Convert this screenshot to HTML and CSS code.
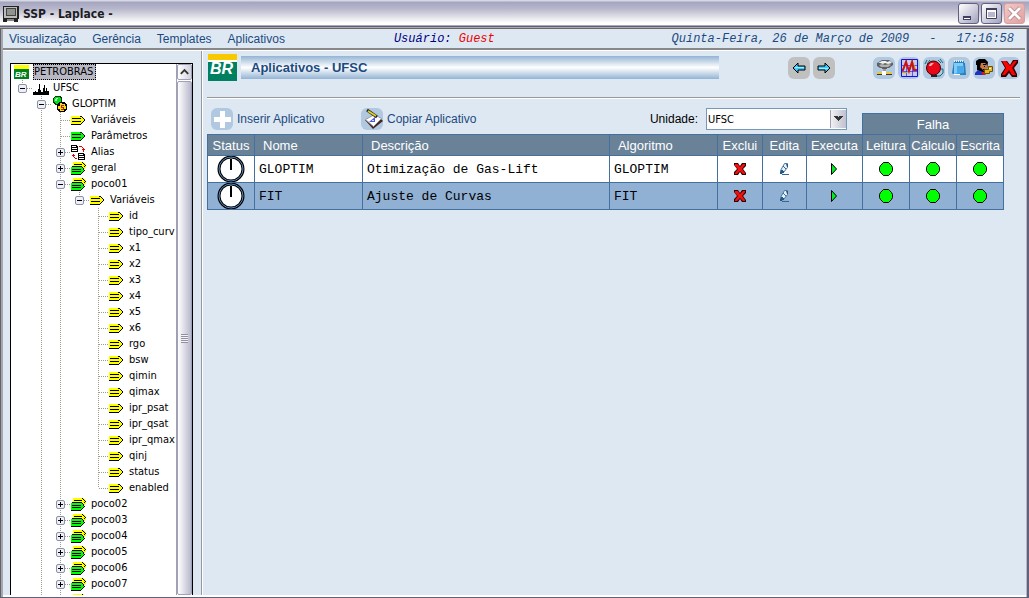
FILE: index.html
```html
<!DOCTYPE html>
<html lang="pt-BR">
<head>
<meta charset="utf-8">
<title>SSP - Laplace -</title>
<link rel="stylesheet" href="styles.css">
</head>
<body>
<svg class="defs" aria-hidden="true">
  <symbol id="tag-yellow" viewBox="0 0 16 16">
    <path fill="#ff0" d="M0 4h10l3 3v2l-3 3H0z"/>
    <path fill="#000" d="M1 6h9v1H1zM1 9h9v1H1zM0 12h10v1H0zM9 4h2v1H9zM11 5h1v1h-1zM12 6h1v1h-1zM13 7h1v2h-1zM12 9h1v1h-1zM11 10h1v1h-1zM10 11h1v1h-1z"/>
  </symbol>
  <symbol id="tag-green" viewBox="0 0 16 16">
    <path fill="#0f0" d="M0 4h10l3 3v2l-3 3H0z"/>
    <path fill="#000" d="M1 6h9v1H1zM1 9h9v1H1zM0 12h10v1H0zM9 4h2v1H9zM11 5h1v1h-1zM12 6h1v1h-1zM13 7h1v2h-1zM12 9h1v1h-1zM11 10h1v1h-1zM10 11h1v1h-1z"/>
  </symbol>
  <symbol id="tag-pair" viewBox="0 0 16 16">
    <path fill="#ff0" d="M2 2h10l3 3v2l-4 4H2z"/>
    <path fill="#000" d="M3 4h8v1H3zM11 2h1v1h-1zM12 3h1v1h-1zM13 4h1v1h-1zM14 5h1v1h-1zM13 6h1v1h-1z"/>
    <path fill="#0f0" d="M0 7h10l3 3v1l-3 3H0z"/>
    <path fill="#000" d="M1 6h10v1H1zM1 9h9v1H1zM1 11h9v1H1zM0 14h10v1H0zM11 7h1v1h-1zM12 8h1v2h-1zM13 10h1v1h-1zM12 11h1v1h-1zM11 12h1v1h-1zM10 13h1v1h-1z"/>
  </symbol>
  <symbol id="alias" viewBox="0 0 16 16">
    <path fill="#000" d="M0 1h5l2 2v5H0z"/><path fill="#fff" d="M1 2h4v1H1zM1 4h5v1H1zM1 6h5v1H1z"/>
    <path fill="#000" d="M7 9h5l2 2v5H7z"/><path fill="#fff" d="M8 10h4v1H8zM8 12h5v1H8zM8 14h5v1H8z"/>
    <path fill="#e00000" d="M8 2h3v1H8zM11 3h1v1h-1zM12 4h1v4h-1zM11 5h3v1h-3zM2 10h1v3H2zM1 11h3v1H1zM3 13h1v1H3zM4 14h2v1H4z"/>
  </symbol>
  <symbol id="plant" viewBox="0 0 16 16">
    <path fill="#000" d="M0 12h2v-1h1v1h2V9h1V4h1v6h1v2h2V8h1V5h1v6h1V8h1v3h2v4H0z"/>
  </symbol>
  <symbol id="gears" viewBox="0 0 16 16">
    <path fill="#003800" d="M3 0h5l2 2v5l-2 2H3L1 7V2z"/><path fill="#0d2" d="M3 1h4l2 2v3L7 8H4L2 6V3z"/><path fill="#afa" d="M4 2h2v1H5v2H3V3h1z"/>
    <path fill="#000" d="M7 6h5l3 3v5l-3 2H7l-2-2V8z"/><path fill="#fd0" d="M8 7h2v1h3v2h1v3h-2v2H8v-2H6v-3h2z"/><path fill="#a22" d="M9 9h3v1h-2v1h2v3H9v-1h2v-1H9z"/>
  </symbol>
  <symbol id="delete" viewBox="0 0 14 14">
    <path fill="#300" d="M1 1h4l2 3 2-3h4v3l-3 3 3 4v2H9l-2-3-2 3H1v-3l3-3-3-4z"/>
    <path fill="#f01010" d="M2 2h3l2 3 3-3h2v1L9 7l3 4v1h-2L7 9l-3 3H2v-1l3-4-3-3z"/>
  </symbol>
  <symbol id="edit" viewBox="0 0 14 14">
    <path fill="#e8f0f8" stroke="#4878a0" d="M7.500 1.500h3v4l-4 5-3 1v-3z"/><path fill="#205888" d="M4 8h2v1h1v2H5v1H3v-2h1zM9 2h2v3h-1z"/>
    <path stroke="#306898" d="M6 4l3 3M5 12.500h7"/>
  </symbol>
  <symbol id="run" viewBox="0 0 14 14"><path fill="#0e2" stroke="#000" d="M4.500 1.500v11l5-5.500z"/></symbol>
  <symbol id="ok" viewBox="0 0 16 16"><path fill="#0f0" stroke="#000" d="M5.500 1.500h5l3 3 1 2v3l-1 2-3 3h-5l-3-3-1-2v-3l1-2z"/></symbol>
  <symbol id="gauge" viewBox="0 0 28 26">
    <circle cx="14" cy="13" r="12" fill="#fff" stroke="#000" stroke-width="3"/>
    <circle cx="14" cy="13" r="12" fill="none" stroke="#5888b8"/><path fill="#000" d="M13 3h2v11h-2z"/>
  </symbol>
  <symbol id="arrow" viewBox="0 0 22 22"><path fill="#40c8ff" stroke="#000" d="M5 11l5-5v3h7v4h-7v3z"/><path stroke="#9ef" d="M7 10.500h9"/></symbol>
</svg>

<div class="window">
  <header class="titlebar">
    <svg class="app-icon" viewBox="0 0 16 16" aria-hidden="true"><path fill="#222" d="M0 0h16v13H0zM0 13h4v3H0zM11 13h4v3h-4z"/><path fill="#bbb" d="M1 1h13v11H1z"/><path fill="#444" d="M3 2h10v8H3z"/><path fill="#909490" d="M4 3h8v6H4z"/><path fill="#888" d="M4 13h7v2H4z"/></svg>
    <h1 class="title">SSP - Laplace -</h1>
    <button class="win-btn" aria-label="Minimizar"><svg viewBox="0 0 19 19"><path fill="#404060" d="M4 12h8v4H4z"/><path fill="#fff" d="M5 14h6v1H5z"/></svg></button>
    <button class="win-btn" aria-label="Maximizar"><svg viewBox="0 0 19 19"><path fill="#fff" stroke="#404060" d="M4.500 4.500h10v10h-10z"/><path fill="#404060" d="M4 4h11v2H4z"/><path fill="#b8b8cc" d="M6 8h7v5H6z"/></svg></button>
    <button class="win-btn close" aria-label="Fechar"><svg viewBox="0 0 19 19"><path stroke="#a06870" stroke-width="4" d="M4 4l11 11M15 4L4 15"/><path stroke="#fff" stroke-width="3" d="M4 4l11 11M15 4L4 15"/></svg></button>
  </header>

  <div class="frame">
    <div class="menubar">
      <nav class="menus"><button>Visualização</button><button>Gerência</button><button>Templates</button><button>Aplicativos</button></nav>
      <p class="user">Usuário: <span class="guest">Guest</span></p>
      <p class="clock"><span>Quinta-Feira, 26 de Março de 2009</span><span>-</span><time>17:16:58</time></p>
    </div>

    <div class="body">
      <aside class="sidebar">
        <div class="tree-box">
          <div class="tree">
            <div class="root"><svg class="ico" viewBox="0 0 16 16" aria-hidden="true"><path fill="#ff0" d="M0 1h15v4H0z"/><path fill="#008020" d="M0 5h15v10H0z"/><text x="1" y="13" class="br-small">BR</text></svg><span class="selected">PETROBRAS</span></div>
            <ul>
              <li><div class="row"><span class="slot"><button class="toggle open" aria-label="UFSC"></button></span><svg class="ico"><use href="#plant"/></svg>UFSC</div>
                <ul>
                  <li class="more"><div class="row"><span class="slot"><button class="toggle open" aria-label="GLOPTIM"></button></span><svg class="ico"><use href="#gears"/></svg>GLOPTIM</div>
                    <ul>
                      <li><div class="row"><span class="slot"></span><svg class="ico"><use href="#tag-yellow"/></svg>Variáveis</div></li>
                      <li><div class="row"><span class="slot"></span><svg class="ico"><use href="#tag-green"/></svg>Parâmetros</div></li>
                      <li><div class="row"><span class="slot"><button class="toggle" aria-label="Alias"></button></span><svg class="ico"><use href="#alias"/></svg>Alias</div></li>
                      <li><div class="row"><span class="slot"><button class="toggle" aria-label="geral"></button></span><svg class="ico"><use href="#tag-pair"/></svg>geral</div></li>
                      <li><div class="row"><span class="slot"><button class="toggle open" aria-label="poco01"></button></span><svg class="ico"><use href="#tag-pair"/></svg>poco01</div>
                        <ul>
                          <li><div class="row"><span class="slot"><button class="toggle open" aria-label="Variáveis"></button></span><svg class="ico"><use href="#tag-yellow"/></svg>Variáveis</div>
                            <ul>
                              <li><div class="row"><span class="slot"></span><svg class="ico"><use href="#tag-yellow"/></svg>id</div></li>
                              <li><div class="row"><span class="slot"></span><svg class="ico"><use href="#tag-yellow"/></svg>tipo_curv</div></li>
                              <li><div class="row"><span class="slot"></span><svg class="ico"><use href="#tag-yellow"/></svg>x1</div></li>
                              <li><div class="row"><span class="slot"></span><svg class="ico"><use href="#tag-yellow"/></svg>x2</div></li>
                              <li><div class="row"><span class="slot"></span><svg class="ico"><use href="#tag-yellow"/></svg>x3</div></li>
                              <li><div class="row"><span class="slot"></span><svg class="ico"><use href="#tag-yellow"/></svg>x4</div></li>
                              <li><div class="row"><span class="slot"></span><svg class="ico"><use href="#tag-yellow"/></svg>x5</div></li>
                              <li><div class="row"><span class="slot"></span><svg class="ico"><use href="#tag-yellow"/></svg>x6</div></li>
                              <li><div class="row"><span class="slot"></span><svg class="ico"><use href="#tag-yellow"/></svg>rgo</div></li>
                              <li><div class="row"><span class="slot"></span><svg class="ico"><use href="#tag-yellow"/></svg>bsw</div></li>
                              <li><div class="row"><span class="slot"></span><svg class="ico"><use href="#tag-yellow"/></svg>qimin</div></li>
                              <li><div class="row"><span class="slot"></span><svg class="ico"><use href="#tag-yellow"/></svg>qimax</div></li>
                              <li><div class="row"><span class="slot"></span><svg class="ico"><use href="#tag-yellow"/></svg>ipr_psat</div></li>
                              <li><div class="row"><span class="slot"></span><svg class="ico"><use href="#tag-yellow"/></svg>ipr_qsat</div></li>
                              <li><div class="row"><span class="slot"></span><svg class="ico"><use href="#tag-yellow"/></svg>ipr_qmax</div></li>
                              <li><div class="row"><span class="slot"></span><svg class="ico"><use href="#tag-yellow"/></svg>qinj</div></li>
                              <li><div class="row"><span class="slot"></span><svg class="ico"><use href="#tag-yellow"/></svg>status</div></li>
                              <li><div class="row"><span class="slot"></span><svg class="ico"><use href="#tag-yellow"/></svg>enabled</div></li>
                            </ul>
                          </li>
                        </ul>
                      </li>
                      <li><div class="row"><span class="slot"><button class="toggle" aria-label="poco02"></button></span><svg class="ico"><use href="#tag-pair"/></svg>poco02</div></li>
                      <li><div class="row"><span class="slot"><button class="toggle" aria-label="poco03"></button></span><svg class="ico"><use href="#tag-pair"/></svg>poco03</div></li>
                      <li><div class="row"><span class="slot"><button class="toggle" aria-label="poco04"></button></span><svg class="ico"><use href="#tag-pair"/></svg>poco04</div></li>
                      <li><div class="row"><span class="slot"><button class="toggle" aria-label="poco05"></button></span><svg class="ico"><use href="#tag-pair"/></svg>poco05</div></li>
                      <li><div class="row"><span class="slot"><button class="toggle" aria-label="poco06"></button></span><svg class="ico"><use href="#tag-pair"/></svg>poco06</div></li>
                      <li><div class="row"><span class="slot"><button class="toggle" aria-label="poco07"></button></span><svg class="ico"><use href="#tag-pair"/></svg>poco07</div></li>
                      <li class="more"><div class="row"><span class="slot"></span><svg class="ico"><use href="#tag-pair"/></svg></div></li>
                    </ul>
                  </li>
                </ul>
              </li>
            </ul>
          </div>
          <div class="scroll">
            <button class="scroll-up" aria-label="Rolar para cima"><svg viewBox="0 0 14 14"><path fill="none" stroke="#333" stroke-width="2" d="M3 9l4-4 4 4"/></svg></button>
            <div class="thumb"><span class="grip"></span></div>
          </div>
        </div>
      </aside>

      <main class="main">
        <div class="head">
          <svg class="logo" viewBox="0 0 29 27" aria-hidden="true"><path fill="#f8c800" d="M0 0h29v6H0z"/><path fill="#fff" d="M0 6h29v2H0z"/><path fill="#008060" d="M0 8h29v19H0z"/><text x="2" y="20" class="br-text">BR</text></svg>
          <h2 class="banner">Aplicativos - UFSC</h2>
          <div class="nav">
            <button class="tool gray" aria-label="Voltar"><svg><use href="#arrow"/></svg></button>
            <button class="tool gray flip" aria-label="Avançar"><svg><use href="#arrow"/></svg></button>
          </div>
          <div class="tools">
            <button class="tool" aria-label="Rede"><svg viewBox="0 0 22 22"><path fill="#606060" d="M4 6l5-3h7l4 3v2l-4 3h-2v1H9v-1H7L4 9z"/><path fill="#f0f0f0" d="M5 6l4-2h4l1 1 3-1 2 2-4 1-3-1-2 1-3-1z"/><path fill="#b0b0b0" d="M6 8l3-1 3 1 4-1 2 1-3 2H8z"/><path fill="#999" d="M10 12h3v3h-3z"/><path fill="#333" d="M4 17h15v1H4z"/><path fill="#e8c840" d="M4 15h5v2H4zM13 15h6v2h-6z"/><path fill="#fff" d="M9 14h4v4H9z"/></svg></button>
            <button class="tool" aria-label="Gráfico"><svg viewBox="0 0 22 22"><path fill="#c8c8e8" stroke="#1010e8" d="M3.500 2.500h16v17h-16z"/><path stroke="#1010e8" stroke-opacity=".6" fill="none" d="M8.500 3v16M14.500 3v16M4 8.500h15M4 14.500h15"/><path fill="none" stroke="#b8b010" d="M4 15.500h5l3-3 3-7 3 8"/><path fill="none" stroke="#d01010" stroke-width="2" d="M4 13h1l3-8 3 9 3-9 2 8h3"/></svg></button>
            <button class="tool" aria-label="Alarme"><svg viewBox="0 0 22 22"><path fill="none" stroke="#186878" d="M2 7l2-4M4 7l3-4M15 3l3 3M17 2l3 4M18 12h2v4l-3 3h-4"/><circle cx="10.500" cy="11" r="7" fill="#e80818" stroke="#400"/><path fill="#ffb0b0" d="M6 8l2-2h3L8 9H6z"/><path fill="#222" d="M8 18h6v2H8z"/></svg></button>
            <button class="tool" aria-label="Bloco de notas"><svg viewBox="0 0 22 22"><path fill="#2880c0" d="M6 4h10v2h1l1 12H6L4 16z"/><path fill="#80ccf8" d="M6 6h9l1 9-10 2z"/><path fill="#48a8e8" d="M9 9h6l1 7-7 1z"/><path stroke="#eee" stroke-dasharray="1 1" stroke-width="2" d="M6 4h10"/><path fill="#fff" d="M5 17h7v1H6z"/></svg></button>
            <button class="tool" aria-label="Usuário"><svg viewBox="0 0 22 22"><path fill="#000" d="M3 4l3-2h6l3 3-1 8-3 3-7-3V8H3z"/><path fill="#c87840" d="M8 6h4l2 2v4l-3 2-4-4z"/><path fill="#000" d="M10 7h3v1h-3zM11 9h1v1h-1zM10 12h3v1h-3z"/><path fill="#2030c0" d="M2 16l3-3 5 2 3 3H2z"/><path fill="#d81818" d="M8 15h4v3h-2z"/><path fill="#e8b820" stroke="#705000" d="M11.500 12.500h4v-3h4v5h-3v2h-5z"/><path fill="#fff" d="M16 11h2v1h-2z"/></svg></button>
            <button class="tool" aria-label="Sair"><svg viewBox="0 0 22 22"><path fill="#300" d="M3 4h6l3 4 3-5h5v3l-4 5 3 6v3h-5l-3-4-3 4H3v-3l4-6z"/><path fill="#f00" d="M4 4h4l4 5 4-5h3l-5 7 4 7h-4l-3-5-4 5H4l4-7z"/></svg></button>
          </div>
        </div>

        <div class="panel">
          <div class="actions">
            <button class="action"><span class="tool"><svg viewBox="0 0 22 22"><path fill="#fff" d="M9 3h5v6h6v5h-6v6H9v-6H3V9h6z"/></svg></span>Inserir Aplicativo</button>
            <button class="action"><span class="tool"><svg viewBox="0 0 22 22"><path fill="#402820" d="M4 12l8 9 10-8-2-2-8 7-6-6z"/><path fill="#fff" stroke="#999" d="M4.500 11.500l9-5 7 4-8 8z"/><path fill="#5058e8" d="M8 14l6-5v5z"/><path fill="#d0d0ff" d="M11 12h2v1h-2z"/><path stroke="#222" stroke-width="3" d="M6 2l10 7"/><path stroke="#e0d020" stroke-width="2" d="M7 3l8 5"/></svg></span>Copiar Aplicativo</button>
            <label class="unit" for="unit">Unidade:</label>
            <select id="unit" class="unit-select"><option>UFSC</option></select>
          </div>

          <table class="apps">
            <colgroup><col class="c47"><col class="c108"><col><col class="c108"><col class="c45"><col class="c44"><col class="c56"><col class="c47"><col class="c47"><col class="c47"></colgroup>
            <thead>
              <tr><td class="blank" colspan="7"></td><th colspan="3">Falha</th></tr>
              <tr><th>Status</th><th class="left">Nome</th><th class="left">Descrição</th><th class="left">Algoritmo</th><th>Exclui</th><th>Edita</th><th>Executa</th><th>Leitura</th><th>Cálculo</th><th>Escrita</th></tr>
            </thead>
            <tbody>
              <tr><td><svg class="gauge"><use href="#gauge"/></svg></td><td class="mono">GLOPTIM</td><td class="mono">Otimização de Gas-Lift</td><td class="mono">GLOPTIM</td>
                <td><button class="cell-btn" aria-label="Exclui GLOPTIM"><svg><use href="#delete"/></svg></button></td><td><button class="cell-btn" aria-label="Edita GLOPTIM"><svg><use href="#edit"/></svg></button></td><td><button class="cell-btn" aria-label="Executa GLOPTIM"><svg><use href="#run"/></svg></button></td>
                <td><svg class="led"><use href="#ok"/></svg></td><td><svg class="led"><use href="#ok"/></svg></td><td><svg class="led"><use href="#ok"/></svg></td></tr>
              <tr class="alt"><td><svg class="gauge"><use href="#gauge"/></svg></td><td class="mono">FIT</td><td class="mono">Ajuste de Curvas</td><td class="mono">FIT</td>
                <td><button class="cell-btn" aria-label="Exclui FIT"><svg><use href="#delete"/></svg></button></td><td><button class="cell-btn" aria-label="Edita FIT"><svg><use href="#edit"/></svg></button></td><td><button class="cell-btn" aria-label="Executa FIT"><svg><use href="#run"/></svg></button></td>
                <td><svg class="led"><use href="#ok"/></svg></td><td><svg class="led"><use href="#ok"/></svg></td><td><svg class="led"><use href="#ok"/></svg></td></tr>
            </tbody>
          </table>
        </div>
      </main>
    </div>
  </div>
</div>
</body>
</html>
```
FILE: styles.css
```css
* { box-sizing: border-box; }
body { margin: 0; font: 12px "Liberation Sans", Arial, sans-serif; color: #1c4a80; }
button { font: inherit; color: inherit; border: 0; padding: 0; background: none; }
svg { display: block; }
h1, h2, p, ul { margin: 0; padding: 0; }
.defs { position: absolute; width: 0; height: 0; }
.br-text { font: italic bold 16px "Liberation Sans", Arial, sans-serif; fill: #fff; }
.br-small { font: italic bold 8px "Liberation Sans", Arial, sans-serif; fill: #fff; }

.window { height: 100vh; display: flex; flex-direction: column; background: #dee8f2; }
.titlebar {
  flex: none; display: flex; align-items: center; gap: 2px; height: 29px; padding: 0 4px 2px 3px;
  background: linear-gradient(#d8d8e4 0 1px, #a4a4c0 2px, #b8b8cc 9px, #fff 23px, #fff 25px, #a8a8b8 25px 26px, #60607a 26px 27px, #a8a8b4 27px 28px, #706860 28px);
}
.app-icon { width: 16px; height: 16px; }
.title { flex: 1; padding-left: 2px; font: bold 12px "DejaVu Sans Condensed", "DejaVu Sans", sans-serif; color: #1c1c24; }
.win-btn { width: 21px; height: 21px; border: 1px solid #606080; border-radius: 3px; background: linear-gradient(135deg, #fff, #c8c8d8 60%, #a0a0bc); }
.win-btn svg { width: 19px; height: 19px; }
.close { border-color: #d8a0a0; background: linear-gradient(135deg, #f4c8c4, #e0a0a0); }

.frame { flex: 1; min-height: 0; display: flex; flex-direction: column; border: solid #60607a; border-width: 0 2px 1px 1px; box-shadow: inset 2px 0 #a8a8a4, inset -1px 0 #b8b8c8, inset 0 -2px #fff; padding: 0 2px 2px 2px; }
.menubar { flex: none; display: flex; align-items: center; height: 22px; padding: 0 11px 2px 6px; border-bottom: 1px solid #fff; box-shadow: inset 0 -2px #888; white-space: nowrap; }
.menus { flex: none; display: flex; gap: 16px; margin-right: 109px; }
.user, .clock { font: italic 12px "Liberation Mono", "Courier New", monospace; }
.user { color: #000080; }
.guest { color: #f00000; }
.clock { display: flex; gap: 20px; margin-left: auto; }

.body { flex: 1; min-height: 0; display: flex; }
.sidebar { flex: none; width: 199px; padding: 12px 8px 0 7px; border-right: 1px solid #989898; box-shadow: 1px 0 #fff; }
.tree-box { height: 100%; display: flex; border: 1px solid #000; border-bottom: 0; background: #fff; }
.tree { flex: 1; min-width: 0; overflow: hidden; padding-left: 3px; font: 11px/18px "DejaVu Sans Condensed", "DejaVu Sans", sans-serif; color: #000; white-space: nowrap; }
.tree ul { list-style: none; }
.tree li ul { padding-left: 19px; }
.tree li { background: repeating-linear-gradient(#a09c88 0 1px, transparent 1px 2px) 8px 0 / 1px 100% no-repeat; }
.tree li:last-child:not(.more) { background-size: 1px 8px; }
.root, .row { display: flex; align-items: center; height: 16px; }
.root { gap: 3px; }
.selected { padding: 0 3px 0 1px; line-height: 16px; background: #b8b8c4; outline: 1px dotted #000; outline-offset: -1px; }
.slot { flex: none; width: 19px; padding-left: 4px; background: repeating-linear-gradient(90deg, #a09c88 0 1px, transparent 1px 2px) 9px 50% / 10px 1px no-repeat; height: 9px; }
.toggle { display: block; width: 9px; height: 9px; border: 1px solid #8890b0; border-radius: 2px; background: linear-gradient(#000, #000) 1px 3px / 5px 1px no-repeat, linear-gradient(#000, #000) 3px 1px / 1px 5px no-repeat, #f0f0f4; }
.toggle.open { background: linear-gradient(#000, #000) 1px 3px / 5px 1px no-repeat, #f0f0f4; }
.ico { flex: none; width: 16px; height: 16px; shape-rendering: crispEdges; }
.row .ico { margin-right: 4px; }
.scroll { flex: none; width: 16px; display: flex; flex-direction: column; border-left: 1px solid #a0a0b0; }
.scroll-up { height: 16px; border: 1px solid #a0a0b8; border-radius: 2px; background: linear-gradient(90deg, #fff, #d0d0dc); }
.scroll-up svg { width: 13px; height: 14px; }
.thumb { flex: 1; display: flex; align-items: center; justify-content: center; margin-top: 1px; border: 1px solid #a0a0b8; border-radius: 2px; background: linear-gradient(90deg, #fff, #dcdce6 50%, #b8b8cc); }
.grip { width: 7px; height: 9px; background: repeating-linear-gradient(#9090a0 0 1px, #f4f4f8 1px 2px); }

.main { flex: 1; min-width: 0; padding: 2px 5px 0 5px; }
.head { display: flex; align-items: center; height: 45px; padding-bottom: 15px; border-bottom: 1px solid #989898; box-shadow: 0 1px #fff; }
.logo { flex: none; width: 29px; height: 27px; margin: 0 4px 0 1px; }
.banner { flex: 1; margin-right: 69px; padding-left: 10px; font: bold 13px/23px "Liberation Sans", Arial, sans-serif; background: linear-gradient(#94b4d4, #fff 50%, #94b4d4); }
.nav, .tools { display: flex; gap: 3px; }
.nav { margin-right: 38px; }
.tool { display: block; width: 22px; height: 22px; border-radius: 6px; background: #b0c8e0; }
.tool svg { width: 22px; height: 22px; }
.gray { background: #c0c0c0; }
.flip { transform: rotate(180deg); }

.panel { display: grid; margin: 10px 16px 0 0; }
.actions { grid-area: 1 / 1; align-self: start; z-index: 1; display: flex; align-items: center; margin-right: 157px; padding-left: 4px; }
.action { display: flex; align-items: center; gap: 4px; width: 150px; }
.unit { margin-left: auto; margin-right: 8px; color: #000; }
.unit-select {
  width: 141px; height: 22px; padding: 0 1px; border: 1px solid #7898b8; border-radius: 0; appearance: none; color: #000;
  font: 11px "DejaVu Sans Condensed", "DejaVu Sans", sans-serif;
  background: linear-gradient(45deg, transparent 50%, #333 50% 85%, transparent 85%) 127px 7px / 5px 6px no-repeat, linear-gradient(-45deg, transparent 50%, #333 50% 85%, transparent 85%) 131px 7px / 5px 6px no-repeat, linear-gradient(90deg, #a0a0b8 0 1px, #f0f0f4 1px, #c0c0d0) 100% 50% / 16px 18px no-repeat, #fff;
}
.apps { grid-area: 1 / 1; width: 100%; margin-top: 5px; table-layout: fixed; border-collapse: collapse; }
.apps th, .apps td { padding: 0; border: 1px solid #4470a0; }
.apps th { height: 21px; background: #6a8298; color: #fff; font: 13px "Liberation Sans", Arial, sans-serif; text-align: center; }
.apps .left { padding-left: 8px; text-align: left; }
.apps .blank { border-top: 0; border-left: 0; background: none; }
.apps tbody tr { height: 27px; background: #fff; }
.apps tbody .alt { background: #90b0d4; }
.apps .mono { padding-left: 4px; font: 13px "Liberation Mono", "Courier New", monospace; color: #000; }
.c44 { width: 44px; }
.c45 { width: 45px; }
.c47 { width: 47px; }
.c56 { width: 56px; }
.c108 { width: 108px; }
.gauge { width: 28px; height: 26px; margin: 0 auto; }
.led { width: 16px; height: 16px; margin: 0 auto; }
.cell-btn { display: block; margin: 0 auto; }
.cell-btn svg { width: 14px; height: 14px; }
```
